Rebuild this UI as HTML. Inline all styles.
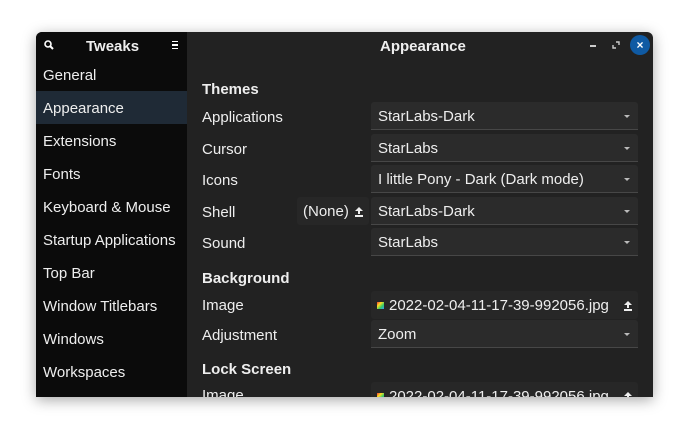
<!DOCTYPE html><html><head><style>
body{margin:0;width:690px;height:438px;background:#fff;position:relative;overflow:hidden;font-family:"Comic Sans MS","Liberation Sans",sans-serif;color:#eee}
.win{position:absolute;left:36px;top:32px;width:617px;height:365px;background:#222;overflow:hidden;box-shadow:0 3px 14px rgba(0,0,0,.35);border-radius:6px 6px 0 0}
.side{position:absolute;left:0;top:0;width:151px;height:365px;background:#0b0b0b}
.side .it{position:absolute;left:7px;font-size:15px;height:33px;line-height:35px}
.sel{position:absolute;left:0;top:59px;width:151px;height:33px;background:#1f2a36}
.t{position:absolute;font-size:15px;margin-top:2px}
.b{font-weight:bold}
.dd{position:absolute;left:335px;width:267px;height:28px;background:#2b2b2b;border-bottom:1px solid #474747;border-radius:3px 3px 0 0;font-size:15px;line-height:30px;padding-left:7px;box-sizing:border-box}
.dd:after{content:"";position:absolute;right:8px;top:13px;border:3px solid transparent;border-top:3px solid #bbb}
.fi{position:absolute;left:335px;width:267px;height:28px;background:#272727;border-radius:3px;font-size:15px;line-height:30px;padding-left:18px;box-sizing:border-box}
.ic{position:absolute;left:6px;top:11px;width:7px;height:7px;background:linear-gradient(135deg,#e33,#fd2,#3c6,#39f)}
.up{position:absolute;right:6px;top:10px;width:8px;height:10px}
.up:before{content:"";position:absolute;left:0;top:0;border:4px solid transparent;border-bottom:4px solid #eee;border-top:0}
.up:after{content:"";position:absolute;left:3px;top:4px;width:2px;height:3px;background:#eee;box-shadow:0 4px 0 -0.5px transparent}
.up i{position:absolute;left:0;top:8px;width:8px;height:1.5px;background:#eee}
</style></head><body>
<div class="win">
<div class="side">
<svg style="position:absolute;left:8px;top:8px" width="10" height="10"><circle cx="4" cy="4" r="3" stroke="#fff" stroke-width="1.6" fill="none"/><line x1="6" y1="6" x2="9" y2="9" stroke="#fff" stroke-width="2"/></svg>
<div class="t b" style="left:50px;top:4px">Tweaks</div>
<div style="position:absolute;left:136px;top:9px;width:6px;height:6px;border-top:1.5px solid #fff;border-bottom:1.5px solid #fff"><div style="margin-top:2px;height:1.5px;background:#fff"></div></div>
<div class="sel"></div>
<div class="it" style="top:26px">General</div>
<div class="it" style="top:59px">Appearance</div>
<div class="it" style="top:92px">Extensions</div>
<div class="it" style="top:125px">Fonts</div>
<div class="it" style="top:158px">Keyboard &amp; Mouse</div>
<div class="it" style="top:191px">Startup Applications</div>
<div class="it" style="top:224px">Top Bar</div>
<div class="it" style="top:257px">Window Titlebars</div>
<div class="it" style="top:290px">Windows</div>
<div class="it" style="top:323px">Workspaces</div>
</div>
<div class="t b" style="left:344px;top:4px">Appearance</div>
<div style="position:absolute;left:554px;top:13px;width:6px;height:1.5px;background:#ccc"></div>
<svg style="position:absolute;left:576px;top:9px" width="8" height="8"><path d="M4 1H7V4M1 4V7H4" stroke="#ccc" stroke-width="1.4" fill="none"/></svg>
<div style="position:absolute;left:594px;top:3px;width:20px;height:20px;border-radius:50%;background:#0f5aa3;color:#fff;font-size:12px;text-align:center;line-height:20px;font-weight:bold">×</div>
<div class="t b" style="left:166px;top:47px">Themes</div>
<div class="t" style="left:166px;top:75px">Applications</div>
<div class="t" style="left:166px;top:107px">Cursor</div>
<div class="t" style="left:166px;top:138px">Icons</div>
<div class="t" style="left:166px;top:170px">Shell</div>
<div class="t" style="left:166px;top:201px">Sound</div>
<div class="dd" style="top:70px">StarLabs-Dark</div>
<div class="dd" style="top:102px">StarLabs</div>
<div class="dd" style="top:133px">I little Pony - Dark (Dark mode)</div>
<div style="position:absolute;left:261px;top:165px;width:72px;height:28px;background:#272727;border-radius:3px;font-size:15px;line-height:30px;padding-left:6px;box-sizing:border-box">(None)<span class="up"><i></i></span></div>
<div class="dd" style="top:165px">StarLabs-Dark</div>
<div class="dd" style="top:196px">StarLabs</div>
<div class="t b" style="left:166px;top:236px">Background</div>
<div class="t" style="left:166px;top:263px">Image</div>
<div class="t" style="left:166px;top:293px">Adjustment</div>
<div class="fi" style="top:259px"><div class="ic"></div>2022-02-04-11-17-39-992056.jpg<span class="up"><i></i></span></div>
<div class="dd" style="top:288px">Zoom</div>
<div class="t b" style="left:166px;top:327px">Lock Screen</div>
<div class="t" style="left:166px;top:353px">Image</div>
<div class="fi" style="top:350px"><div class="ic"></div>2022-02-04-11-17-39-992056.jpg<span class="up"><i></i></span></div>
</div>
</body></html>
